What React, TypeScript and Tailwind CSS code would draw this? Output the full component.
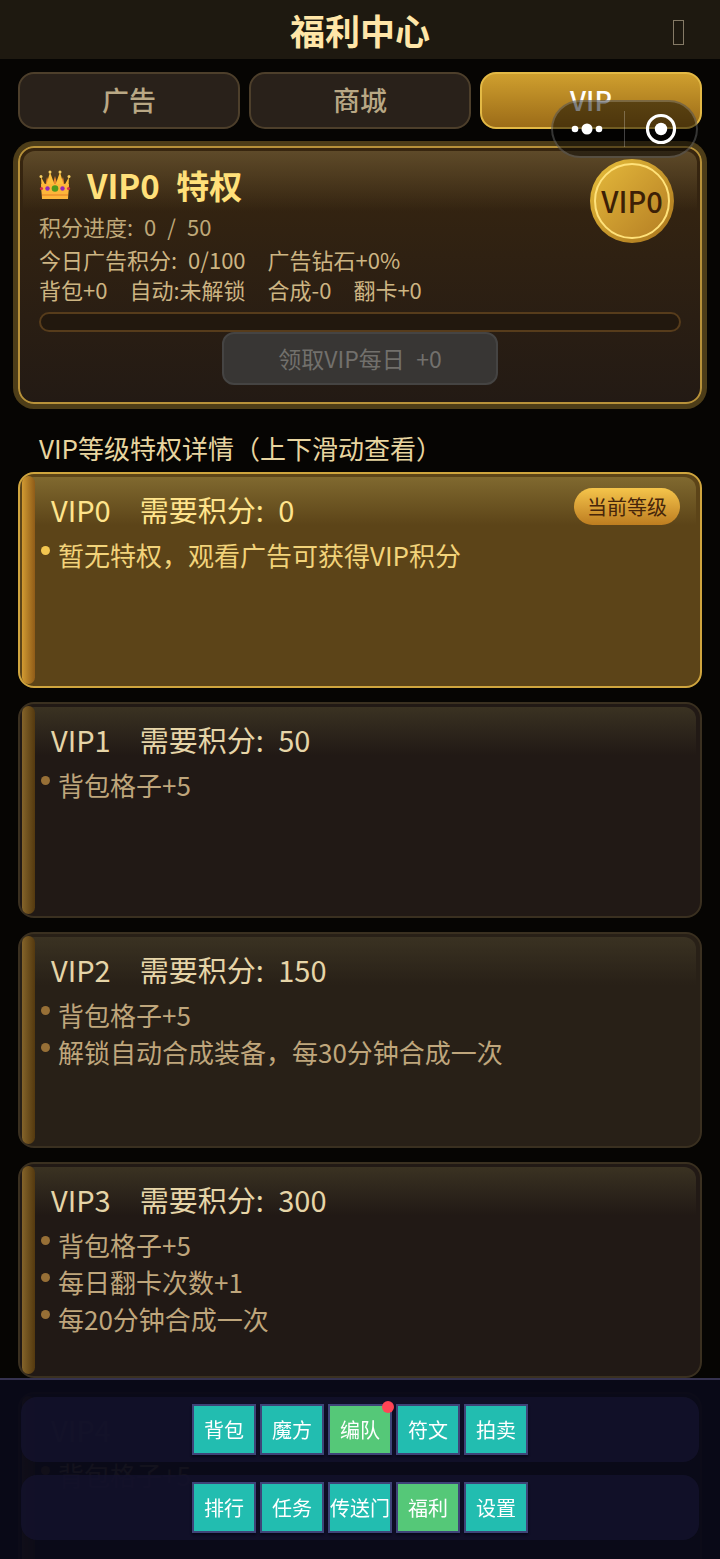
import React, { useState } from "react";
import clsx from "clsx";

type Plan = { level: number; points?: number; perks: string[] };
type NavItem = { label: string; active?: boolean; dot?: boolean };

const TABS = ["广告", "商城", "VIP"];

const PLANS: Plan[] = [
  { level: 0, points: 0, perks: ["暂无特权，观看广告可获得VIP积分"] },
  { level: 1, points: 50, perks: ["背包格子+5"] },
  { level: 2, points: 150, perks: ["背包格子+5", "解锁自动合成装备，每30分钟合成一次"] },
  { level: 3, points: 300, perks: ["背包格子+5", "每日翻卡次数+1", "每20分钟合成一次"] },
  { level: 4, perks: ["背包格子+5"] },
];

const NAV_ROWS: NavItem[][] = [
  [
    { label: "背包" },
    { label: "魔方" },
    { label: "编队", active: true, dot: true },
    { label: "符文" },
    { label: "拍卖" },
  ],
  [
    { label: "排行" },
    { label: "任务" },
    { label: "传送门" },
    { label: "福利", active: true },
    { label: "设置" },
  ],
];

function Crown() {
  return (
    <svg viewBox="0 0 32 30" className="w-8 h-[30px]" aria-hidden="true">
      <path d="M5 22 8 7l5 12zM27 22 24 7l-5 12zM12 20 16 6l4 14z" fill="#e8862a" />
      <path d="M3 25 2 7l5 9 4-14 5 14 5-14 4 14 5-9-1 18z" fill="#fdc03c" />
      <path d="M2 14h28l-1 15H3z" fill="#fdb63a" />
      <path d="M3 25h26" stroke="#e8862a" strokeWidth="1.2" />
      <g fill="#f6cf62">
        <circle cx="2" cy="6.5" r="1.5" />
        <circle cx="11" cy="2" r="1.5" />
        <circle cx="21" cy="2" r="1.5" />
        <circle cx="30" cy="6.5" r="1.5" />
      </g>
      <circle cx="16" cy="18.5" r="3.3" fill="#4f9a1c" />
      <circle cx="8.5" cy="18.5" r="2.2" fill="#9328b8" />
      <circle cx="23.5" cy="18.5" r="2.2" fill="#9328b8" />
      <circle cx="2.5" cy="18.5" r="1.6" fill="#d8324a" />
      <circle cx="29.5" cy="18.5" r="1.6" fill="#d8324a" />
    </svg>
  );
}

// Floating host menu that sits above the page
function Capsule() {
  return (
    <div className="fixed top-[100px] right-[22px] z-20 flex h-[58px] w-[147px] items-center rounded-full border-2 border-white/20 bg-black/50">
      <button type="button" aria-label="更多" className="flex flex-1 justify-center">
        <svg viewBox="0 0 36 12" className="w-9 h-3" fill="#fff">
          <circle cx="4" cy="6" r="3.3" />
          <circle cx="16" cy="6" r="5.5" />
          <circle cx="28" cy="6" r="3.3" />
        </svg>
      </button>
      <span className="h-9 w-px bg-white/25" />
      <button type="button" aria-label="关闭小程序" className="flex flex-1 justify-center">
        <svg viewBox="0 0 32 32" className="size-8">
          <circle cx="16" cy="16" r="13.5" fill="none" stroke="#fff" strokeWidth="3.2" />
          <circle cx="16" cy="16" r="6.2" fill="#fff" />
        </svg>
      </button>
    </div>
  );
}

function Summary() {
  return (
    <section className="relative mt-[17px] rounded-2xl border-2 border-[#b8923a] bg-linear-to-b from-[#38260f] to-[#231a14] px-[19px] pt-[17px] pb-[17px] shadow-[0_0_0_5px_#4d3d18]">
      <div className="absolute inset-x-[3px] top-[3px] h-[60px] rounded-t-xl bg-linear-to-b from-[#5e4a29] to-transparent" />
      <div className="relative">
        <h2 className="flex items-center gap-4 text-[33px] leading-10 font-bold text-[#ffe07a]">
          <Crown />
          <span>VIP0&ensp;特权</span>
        </h2>
        <div className="mt-[6px] text-[22px] leading-[30px] text-[#bfa878]">
          <p className="mb-[3px]">积分进度:&ensp;0&ensp;/&ensp;50</p>
          <p className="flex gap-[22px] text-[#cdb583]">
            <span>今日广告积分:&ensp;0/100</span>
            <span>广告钻石+0%</span>
          </p>
          <p className="flex gap-[22px] text-[#cdb583]">
            <span>背包+0</span>
            <span>自动:未解锁</span>
            <span>合成-0</span>
            <span>翻卡+0</span>
          </p>
        </div>
        <div
          role="progressbar"
          aria-label="积分进度"
          aria-valuemin={0}
          aria-valuemax={50}
          aria-valuenow={0}
          className="mt-2 h-5 rounded-full border-2 border-[#573c1b] bg-[#22180e]"
        />
        <button
          type="button"
          disabled
          className="mx-auto block h-[53px] w-[276px] rounded-xl border-2 border-[#454443] bg-[#383634] text-[23px] text-[#72706c]"
        >
          领取VIP每日&ensp;+0
        </button>
      </div>
      <div className="absolute top-[11px] right-[26px] flex size-[84px] items-center justify-center rounded-full bg-linear-to-br from-[#e8c03c] to-[#a8731c]">
        <div className="flex size-[76px] items-center justify-center rounded-full border-2 border-[#ffe27a] bg-linear-to-br from-[#e3b73a] to-[#b57f24] text-[29px] font-medium text-[#3d1f06]">
          VIP0
        </div>
      </div>
    </section>
  );
}

function PlanCard({ plan, current }: { plan: Plan; current: boolean }) {
  return (
    <li
      className={clsx(
        "relative h-[216px] shrink-0 rounded-2xl border-2 pt-[17px]",
        current && "border-[#cfa53e] bg-[#5c4418]",
        !current && "border-[#3a3020]",
        !current && (plan.level % 4 === 2 ? "bg-[#282017]" : "bg-[#211915]"),
      )}
    >
      <div
        className={clsx(
          "absolute top-[3px] right-[4px] left-[2px] h-12 rounded-t-xl bg-linear-to-b to-transparent",
          current ? "from-[#80692f]" : "from-[#3a3222]",
        )}
      />
      <div
        className={clsx(
          "absolute top-[2px] bottom-[2px] left-[2px] w-[13px] rounded-lg bg-linear-to-r",
          current ? "from-[#d19a32] to-[#8f5c18]" : "from-[#84642a] to-[#54390f]",
        )}
      />
      <div className="relative">
        <h3
          className={clsx(
            "flex gap-[29px] pl-[31px] text-[29px] leading-9",
            current ? "text-[#ffe48c]" : "text-[#e6d5a8]",
          )}
        >
          <span>VIP{plan.level}</span>
          {plan.points != null && <span>需要积分:&ensp;{plan.points}</span>}
        </h3>
        <ul className={clsx("mt-[9px] pl-[21px] text-[26px] leading-[37px]", current ? "text-[#f2d37a]" : "text-[#bfa67c]")}>
          {plan.perks.map((perk) => (
            <li key={perk} className="flex items-start gap-2">
              <span className={clsx("mt-[10px] size-[9px] rounded-full", current ? "bg-[#f3c650]" : "bg-[#976f36]")} />
              {perk}
            </li>
          ))}
        </ul>
      </div>
      {current && (
        <span className="absolute top-[14px] right-5 rounded-full bg-linear-to-b from-[#f5c54b] to-[#bd7d20] px-[13px] text-[20px] leading-[37px] text-[#46250a]">
          当前等级
        </span>
      )}
    </li>
  );
}

function BottomNav() {
  return (
    <nav className="fixed inset-x-0 bottom-0 z-10 flex flex-col gap-[13px] border-t-2 border-[#35324f] bg-[#090918]/95 px-[21px] pt-[17px] pb-[19px]">
      {NAV_ROWS.map((row, i) => (
        <div key={i} className="flex justify-center gap-1 rounded-2xl bg-[#14132d]/80 py-[7px]">
          {row.map((item) => (
            <button
              key={item.label}
              type="button"
              className={clsx(
                "relative h-[51px] w-16 border-2 border-[#3f4478] text-[20px] whitespace-nowrap text-white shadow-[0_2px_2px_#08081a]",
                item.active ? "bg-[#55c878]" : "bg-[#22bdb0]",
              )}
            >
              <span className="flex justify-center">{item.label}</span>
              {item.dot && <span className="absolute -top-[5px] -right-[4px] size-3 rounded-full bg-[#ff4455]" />}
            </button>
          ))}
        </div>
      ))}
    </nav>
  );
}

export default function App() {
  const [tab, setTab] = useState("VIP");

  return (
    <div className="flex h-screen flex-col overflow-hidden bg-[#060503] font-['Noto_Sans_CJK_SC',sans-serif]">
      <header className="relative flex h-[59px] shrink-0 items-center justify-center bg-[#1e1910]">
        <h1 className="text-[35px] leading-10 font-bold text-[#ffe6a8]">福利中心</h1>
        <button type="button" aria-label="关闭" className="absolute top-5 right-9 h-[25px] w-[11px] border border-[#857a66]" />
      </header>

      <main className="flex min-h-0 flex-1 flex-col px-[18px] pt-[13px]">
        <div className="grid shrink-0 grid-cols-3 gap-[9px]">
          {TABS.map((name) => (
            <button
              key={name}
              type="button"
              onClick={() => setTab(name)}
              className={clsx(
                "h-[57px] rounded-2xl border-2 text-[27px] font-medium",
                tab === name
                  ? "border-[#e3b945] bg-linear-to-b from-[#cf9f2e] to-[#9c6c18] text-white"
                  : "border-[#4d3f2b] bg-[#29211a] text-[#b9a885]",
              )}
            >
              {name}
            </button>
          ))}
        </div>

        <Summary />

        <h2 className="mt-7 mb-2 shrink-0 pl-[21px] text-[26px] leading-8 text-[#e8d5a0]">
          VIP等级特权详情（上下滑动查看）
        </h2>
        <ul className="flex min-h-0 flex-col gap-[14px]">
          {PLANS.map((plan) => (
            <PlanCard key={plan.level} plan={plan} current={plan.level === 0} />
          ))}
        </ul>
      </main>

      <BottomNav />
      <Capsule />
    </div>
  );
}
